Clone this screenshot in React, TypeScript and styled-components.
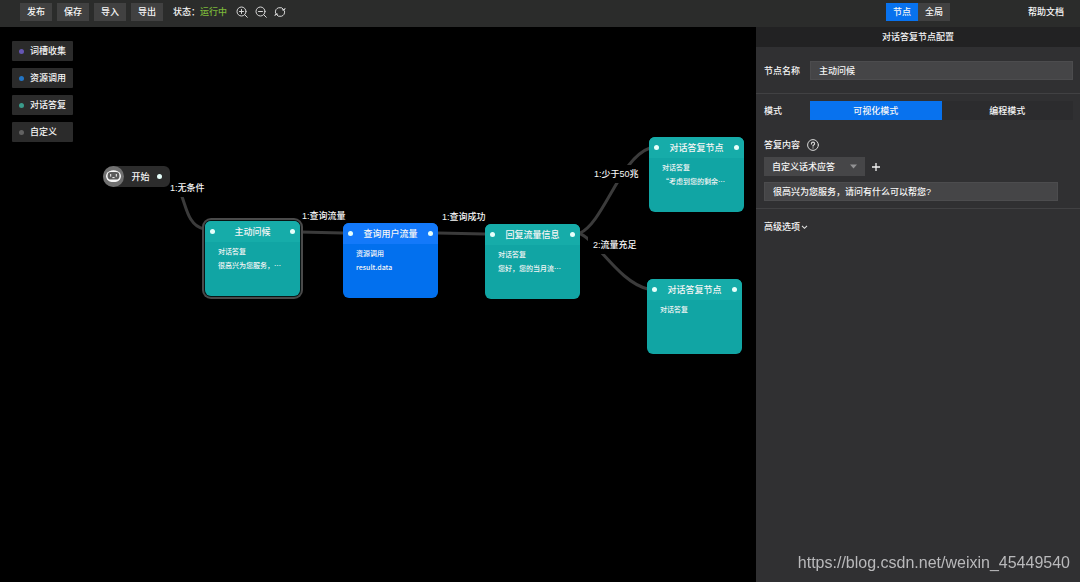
import React, { useState } from "react";
import styled, { createGlobalStyle } from "styled-components";

const GlobalStyle = createGlobalStyle`
  *, *::before, *::after { box-sizing: border-box; }
  body {
    margin: 0;
    background: #000;
    color: #f6f6f6;
    font: 500 9px/12px "Liberation Sans", "Noto Sans CJK SC", sans-serif;
  }
  button, input, select {
    font: inherit;
    color: inherit;
    border: 0;
    margin: 0;
    padding: 0;
    border-radius: 0;
  }
  button { cursor: pointer; background: none; }
`;

const Page = styled.div`
  display: flex;
  flex-direction: column;
  min-height: 100vh;
`;

const TopBar = styled.header`
  display: flex;
  align-items: flex-start;
  height: 27px;
  padding-top: 3px;
  background: #2b2c2b;
`;

const Tools = styled.div`
  flex: 1;
  display: flex;
  align-items: center;
  gap: 5px;
  padding-left: 20px;
`;

const ToolButton = styled.button`
  width: 32px;
  height: 18px;
  background: #414141;
`;

const Status = styled.span`
  margin-left: 5px;
`;

const Running = styled.span`
  color: #7cb83a;
`;

const IconGroup = styled.div`
  display: flex;
  gap: 7px;
  margin-left: 4px;
`;

const IconButton = styled.button`
  display: flex;
  width: 12px;
  height: 12px;
`;

const TopRight = styled.div`
  width: 30%;
  min-width: 280px;
  display: grid;
  grid-template-columns: 1fr auto 1fr;
  align-items: center;
  padding: 0 16px;
`;

const ScopeTabs = styled.div`
  grid-column: 2;
  display: flex;
`;

const ScopeTab = styled.button<{ $active: boolean }>`
  width: 32px;
  height: 18px;
  background: ${(p) => (p.$active ? "#0872ee" : "#414141")};
`;

const HelpLink = styled.a`
  justify-self: end;
  color: inherit;
  text-decoration: none;
`;

const Body = styled.div`
  flex: 1;
  display: flex;
`;

const Canvas = styled.main`
  flex: 1;
  position: relative;
  overflow: hidden;
  background: #000;
`;

const Palette = styled.div`
  display: flex;
  flex-direction: column;
  align-items: flex-start;
  gap: 7px;
  padding: 14px 12px;
`;

const PaletteItem = styled.button`
  display: flex;
  align-items: center;
  gap: 6px;
  width: 61px;
  height: 20px;
  padding-left: 7px;
  border-radius: 1px;
  background: #2b2b2b;
`;

const PaletteDot = styled.i<{ $color: string }>`
  width: 5px;
  height: 5px;
  border-radius: 50%;
  background: ${(p) => p.$color};
`;

const Edges = styled.svg`
  position: absolute;
  left: 0;
  top: 0;
  pointer-events: none;
`;

const EdgeLabel = styled.span<{ $x: number; $y: number }>`
  position: absolute;
  left: ${(p) => p.$x}px;
  top: ${(p) => p.$y}px;
  padding: 3px 5px;
  background: #000;
  white-space: nowrap;
`;

const StartNode = styled.div`
  position: absolute;
  left: 103px;
  top: 139px;
  display: flex;
  align-items: center;
  justify-content: space-between;
  width: 67px;
  height: 21px;
  padding-right: 8px;
  border-radius: 10px 6px 6px 10px;
  background: #2c2c2c;
`;

const Port = styled.i`
  width: 5px;
  height: 5px;
  border-radius: 50%;
  background: #e6fffb;
`;

type Tone = "teal" | "blue";
const tones: Record<Tone, { head: string; body: string }> = {
  teal: { head: "#16aca9", body: "#11a5a4" },
  blue: { head: "#1379fa", body: "#0270ee" },
};

const Node = styled.article<{ $x: number; $y: number; $tone: Tone; $selected?: boolean }>`
  position: absolute;
  left: ${(p) => p.$x}px;
  top: ${(p) => p.$y}px;
  width: 95px;
  height: 75px;
  overflow: hidden;
  border-radius: 6px;
  background: ${(p) => tones[p.$tone].body};
  box-shadow: ${(p) => (p.$selected ? "0 0 0 1px #081414, 0 0 0 3px #4a4a4a" : "none")};
`;

const NodeHead = styled.header<{ $tone: Tone }>`
  display: flex;
  align-items: center;
  justify-content: space-between;
  height: 21px;
  padding: 0 5px;
  background: ${(p) => tones[p.$tone].head};
`;

const NodeBody = styled.div`
  padding: 2px 13px;
  font-family: "Noto Sans CJK SC", sans-serif;
  font-size: 7px;
  line-height: 14px;
  white-space: nowrap;
`;

const Panel = styled.aside`
  width: 30%;
  min-width: 280px;
  background: #303032;
`;

const PanelTitle = styled.h2`
  margin: 0;
  height: 20px;
  font-size: 9px;
  line-height: 20px;
  font-weight: 500;
  text-align: center;
  background: #222223;
`;

const Row = styled.div`
  display: grid;
  grid-template-columns: 46px 1fr;
  align-items: center;
  padding: 0 7px 0 8px;
`;

const NameRow = styled(Row)`
  padding-top: 14px;
  padding-bottom: 13px;
  border-bottom: 1px solid #414143;
`;

const ModeRow = styled(Row)`
  padding-top: 7px;
`;

const TextInput = styled.input`
  width: 100%;
  height: 19px;
  padding: 0 8px;
  background: #454547;
  border: 1px solid #4c4c4e;
`;

const Modes = styled.div`
  display: grid;
  grid-template-columns: 1fr 1fr;
`;

const ModeButton = styled.button<{ $active: boolean }>`
  height: 19px;
  background: ${(p) => (p.$active ? "#0872ee" : "#2c2c2e")};
`;

const Reply = styled.section`
  display: flex;
  flex-direction: column;
  gap: 6px;
  padding: 19px 22px 7px 8px;
  border-bottom: 1px solid #414143;
`;

const ReplyLabel = styled.div`
  display: flex;
  align-items: center;
  gap: 7px;
  height: 12px;
`;

const SelectLine = styled.div`
  display: flex;
  align-items: center;
  gap: 6px;
`;

const SelectBox = styled.div`
  position: relative;
  display: flex;
`;

const Select = styled.select`
  appearance: none;
  width: 101px;
  height: 19px;
  padding: 0 8px;
  background: #464648;
`;

const Caret = styled.svg`
  position: absolute;
  right: 8px;
  top: 7px;
  pointer-events: none;
`;

const Advanced = styled.button`
  display: flex;
  align-items: center;
  gap: 1px;
  margin: 12px 8px;
`;

const Watermark = styled.span`
  position: fixed;
  right: 10px;
  bottom: 9px;
  color: #b9b9bb;
  font-size: 16px;
  font-weight: 400;
  line-height: 20px;
`;

const stroke = { fill: "none", stroke: "#d8d8d8", strokeWidth: 1, strokeLinecap: "round" as const };

const Zoom = ({ plus }: { plus?: boolean }) => (
  <svg width="12" height="12" viewBox="0 0 12 12" {...stroke}>
    <circle cx="5.5" cy="5.5" r="4.5" />
    <path d="M8.8 8.8 11.3 11.3M3.5 5.5h4" />
    {plus && <path d="M5.5 3.5v4" />}
  </svg>
);

const Refresh = () => (
  <svg width="12" height="12" viewBox="0 0 12 12" {...stroke}>
    <path d="M1.4 6.6A4.6 4.6 0 0 1 10 3.9M10.6 5.4A4.6 4.6 0 0 1 2 8.1" />
    <path d="M11 2.4 10.2 4.4 8.3 3.8M1 9.6 1.8 7.6 3.7 8.2" />
  </svg>
);

const Robot = () => (
  <svg width="21" height="21" viewBox="0 0 21 21">
    <circle cx="10.5" cy="10.5" r="10.5" fill="#717171" />
    <path d="M6.4 5.2Q10.5 3.2 14.6 5.2Q18.2 7 18 10.6Q17.6 14 14.4 15.4Q10.5 16.8 6.6 15.4Q3.4 14 3 10.6Q2.8 7 6.4 5.2Z" fill="#f8f8f8" />
    <rect x="4.6" y="6" width="11.8" height="7.6" rx="3.4" fill="#5c5c5c" />
    <path d="M7.7 8v2.6M13.3 8v2.6M9.4 11.6h2.2" fill="none" stroke="#f8f8f8" strokeWidth="1" />
  </svg>
);

const palette = [
  { label: "词槽收集", color: "#6556b4" },
  { label: "资源调用", color: "#2375c4" },
  { label: "对话答复", color: "#3a9b8b" },
  { label: "自定义", color: "#626262" },
];

const nodes: { x: number; y: number; tone: Tone; title: string; lines: string[]; selected?: boolean }[] = [
  { x: 205, y: 194, tone: "teal", title: "主动问候", lines: ["对话答复", "很高兴为您服务，…"], selected: true },
  { x: 343, y: 196, tone: "blue", title: "查询用户流量", lines: ["资源调用", "result.data"] },
  { x: 485, y: 197, tone: "teal", title: "回复流量信息", lines: ["对话答复", "您好，您的当月流…"] },
  { x: 649, y: 110, tone: "teal", title: "对话答复节点", lines: ["对话答复", "“考虑到您的剩余…"] },
  { x: 647, y: 252, tone: "teal", title: "对话答复节点", lines: ["对话答复"] },
];

const labels = [
  { x: 165, y: 152, text: "1:无条件" },
  { x: 297, y: 180, text: "1:查询流量" },
  { x: 437, y: 181, text: "1:查询成功" },
  { x: 589, y: 138, text: "1:少于50兆" },
  { x: 588, y: 209, text: "2:流量充足" },
];

export default function App() {
  const [scope, setScope] = useState("节点");
  const [mode, setMode] = useState("可视化模式");

  return (
    <Page>
      <GlobalStyle />
      <TopBar>
        <Tools>
          {["发布", "保存", "导入", "导出"].map((t) => (
            <ToolButton key={t}>{t}</ToolButton>
          ))}
          <Status>
            状态：<Running>运行中</Running>
          </Status>
          <IconGroup>
            <IconButton aria-label="放大"><Zoom plus /></IconButton>
            <IconButton aria-label="缩小"><Zoom /></IconButton>
            <IconButton aria-label="刷新"><Refresh /></IconButton>
          </IconGroup>
        </Tools>
        <TopRight>
          <ScopeTabs>
            {["节点", "全局"].map((t) => (
              <ScopeTab key={t} $active={scope === t} onClick={() => setScope(t)}>{t}</ScopeTab>
            ))}
          </ScopeTabs>
          <HelpLink href="#help">帮助文档</HelpLink>
        </TopRight>
      </TopBar>

      <Body>
        <Canvas>
          <Palette>
            {palette.map((p) => (
              <PaletteItem key={p.label}>
                <PaletteDot $color={p.color} />
                {p.label}
              </PaletteItem>
            ))}
          </Palette>

          <Edges width="756" height="400" fill="none" stroke="#3b3b3b" strokeWidth="3">
            <path d="M168 156C188 156 180 197 204 202" />
            <path d="M300 205L343 206" />
            <path d="M438 206L485 207" />
            <path d="M580 206C604 195 620 131 650 121" />
            <path d="M578 206C596 211 618 255 648 262" />
          </Edges>
          {labels.map((l) => (
            <EdgeLabel key={l.text} $x={l.x} $y={l.y}>{l.text}</EdgeLabel>
          ))}
          <StartNode>
            <Robot />
            <span>开始</span>
            <Port />
          </StartNode>
          {nodes.map((n, i) => (
            <Node key={i} $x={n.x} $y={n.y} $tone={n.tone} $selected={n.selected}>
              <NodeHead $tone={n.tone}>
                <Port />
                <span>{n.title}</span>
                <Port />
              </NodeHead>
              <NodeBody>
                {n.lines.map((line) => (
                  <div key={line}>{line}</div>
                ))}
              </NodeBody>
            </Node>
          ))}
        </Canvas>

        <Panel>
          <PanelTitle>对话答复节点配置</PanelTitle>
          <NameRow>
            <label htmlFor="node-name">节点名称</label>
            <TextInput id="node-name" defaultValue="主动问候" />
          </NameRow>
          <ModeRow>
            <span id="mode-label">模式</span>
            <Modes role="group" aria-labelledby="mode-label">
              {["可视化模式", "编程模式"].map((t) => (
                <ModeButton key={t} $active={mode === t} onClick={() => setMode(t)}>{t}</ModeButton>
              ))}
            </Modes>
          </ModeRow>
          <Reply>
            <ReplyLabel>
              <label htmlFor="reply-type">答复内容</label>
              <svg width="12" height="12" viewBox="0 0 12 12" {...stroke}>
                <circle cx="6" cy="6" r="5.4" />
                <path d="M4.4 4.9Q4.4 3.2 6 3.2T7.6 4.7Q7.6 5.5 6.7 6T6 7.1M6 8.8v.2" strokeWidth="1.2" />
              </svg>
            </ReplyLabel>
            <SelectLine>
              <SelectBox>
                <Select id="reply-type">
                  <option>自定义话术应答</option>
                </Select>
                <Caret width="7" height="5" viewBox="0 0 7 5">
                  <path d="M0 .5h7L3.5 4.5Z" fill="#929294" />
                </Caret>
              </SelectBox>
              <IconButton aria-label="添加">
                <svg width="10" height="12" viewBox="0 0 10 12" fill="none" stroke="#f2f2f2" strokeWidth="1.3">
                  <path d="M1 6h8M5 2v8" />
                </svg>
              </IconButton>
            </SelectLine>
            <TextInput aria-label="答复文本" defaultValue="很高兴为您服务，请问有什么可以帮您?" />
          </Reply>
          <Advanced>
            高级选项
            <svg width="7" height="6" viewBox="0 0 7 6" fill="none" stroke="#e0e0e0" strokeWidth="1.1">
              <path d="M1 1.8 3.5 4.3 6 1.8" />
            </svg>
          </Advanced>
        </Panel>
      </Body>
      <Watermark>https://blog.csdn.net/weixin_45449540</Watermark>
    </Page>
  );
}
